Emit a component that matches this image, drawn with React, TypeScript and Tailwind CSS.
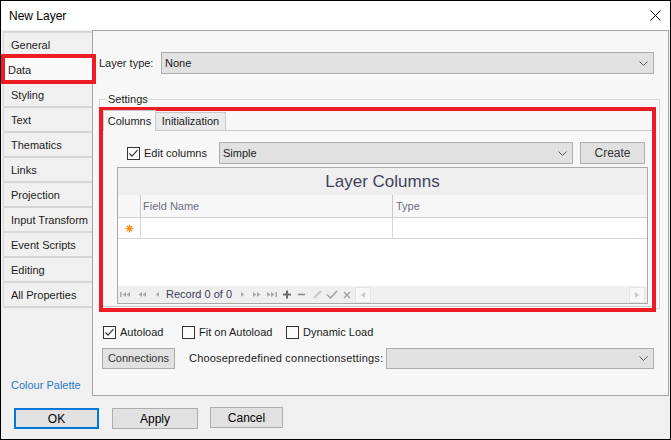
import React from "react";

function Chevron() {
  return (
    <svg width="9" height="5" viewBox="0 0 9 5" className="shrink-0">
      <path d="M0.5 0.5L4.5 4.5L8.5 0.5" fill="none" stroke="#555555" strokeWidth="1" />
    </svg>
  );
}

function Check({ checked }: { checked?: boolean }) {
  return (
    <span className="w-[13px] h-[13px] border border-[#333333] bg-[#fbfbfb] flex items-center justify-center shrink-0">
      {checked && (
        <svg width="11" height="11" viewBox="0 0 11 11">
          <path d="M1.5 5.5L4 8.2L9.5 2.2" fill="none" stroke="#333333" strokeWidth="1.2" />
        </svg>
      )}
    </span>
  );
}

const items = [
  "General",
  "Data",
  "Styling",
  "Text",
  "Thematics",
  "Links",
  "Projection",
  "Input Transform",
  "Event Scripts",
  "Editing",
  "All Properties",
];

function Star() {
  return (
    <svg width="9" height="9" viewBox="0 0 9 9">
      <g stroke="#f7931e" strokeWidth="1.2">
        <path d="M4.5 0.5V8.5M0.5 4.5H8.5M1.7 1.7L7.3 7.3M7.3 1.7L1.7 7.3" />
      </g>
      <circle cx="4.5" cy="4.5" r="2.2" fill="#f7931e" />
    </svg>
  );
}

export default function App() {
  return (
    <div className="relative w-[671px] h-[440px] border border-black bg-[#f0f0f0] flex flex-col overflow-hidden font-['Liberation_Sans',Arial,sans-serif] text-[11px] text-[#1b1b1b] leading-none">
      {/* title bar */}
      <div className="h-[29px] shrink-0 bg-white flex items-center justify-between">
        <span className="pl-[8px] pt-[1px] text-[12px] text-black">New Layer</span>
        <svg width="11" height="11" viewBox="0 0 11 11" className="mr-[9px]">
          <path d="M0.5 0.5L10.5 10.5M10.5 0.5L0.5 10.5" stroke="#000000" strokeWidth="1" />
        </svg>
      </div>

      {/* body */}
      <div className="flex h-[366px] shrink-0">
        {/* sidebar */}
        <div className="w-[91px] flex flex-col">
          <div className="mt-[1px] ml-[2px] border-t-2 border-[#d6d6d6]">
            {items.map((it) =>
              it === "Data" ? (
                <div
                  key={it}
                  className="h-[25px] -ml-[2px] pl-[7px] pt-[1px] bg-[#f9f9f9] border-b-2 border-[#d6d6d6] flex items-center"
                >
                  {it}
                </div>
              ) : (
                <div
                  key={it}
                  className="h-[25px] pl-[7px] pt-[1px] border-l border-b-2 border-[#d6d6d6] flex items-center"
                >
                  {it}
                </div>
              )
            )}
          </div>
          <div className="mt-auto pl-[10px] pb-[5px] text-[#2b78c8]">Colour Palette</div>
        </div>

        {/* panel */}
        <div className="w-[577px] border border-[#a6a6a6] bg-[#f7f7f7] flex flex-col">
          {/* layer type */}
          <div className="flex items-center mt-[21px] pl-[6px] pr-[14px]">
            <span className="w-[62px]">Layer type:</span>
            <div className="flex-1 h-[22px] border border-[#adadad] bg-[#e1e1e1] flex items-center justify-between pl-[3px] pr-[5px]">
              <span>None</span>
              <Chevron />
            </div>
          </div>

          {/* settings */}
          <fieldset className="mt-[19px] ml-[6px] mr-[8px] border border-[#d8d8d8] pl-[2px] pr-[5px] pb-[1px]">
            <legend className="ml-[5px] px-[1px] leading-[13px]">Settings</legend>
            <div className="pt-[4px]">
              {/* tabs */}
              <div className="flex items-end h-[20px] pl-[1px]">
                <div className="relative z-10 h-[21px] -mb-px w-[53px] border border-b-0 border-[#c8c8c8] bg-[#f7f7f7] flex items-center justify-center">
                  Columns
                </div>
                <div className="h-[18px] w-[70px] border border-l-0 border-b-0 border-[#c8c8c8] bg-[#ebebeb] flex items-center justify-center">
                  Initialization
                </div>
              </div>
              {/* tab page */}
              <div className="border border-[#c8c8c8] pl-[14px] pr-[5px] pt-[11px] pb-[2px]">
                <div className="flex items-center h-[22px] mr-[3px]">
                  <div className="w-[92px] ml-[10px] flex items-center gap-[4px]">
                    <Check checked />
                    <span>Edit columns</span>
                  </div>
                  <div className="flex-1 h-[22px] border border-[#adadad] bg-[#e1e1e1] flex items-center justify-between pl-[3px] pr-[5px]">
                    <span>Simple</span>
                    <Chevron />
                  </div>
                  <div className="ml-[7px] w-[65px] h-[22px] -mt-[1px] border border-[#adadad] bg-[#e1e1e1] flex items-center justify-center text-[12px] text-[#333333]">
                    Create
                  </div>
                </div>

                {/* grid */}
                <div className="mt-[3px] h-[137px] border border-[#a9a9a9] flex flex-col bg-white">
                  <div className="h-[27px] bg-[#efefef] flex items-center justify-center text-[17px] text-[#42425c]">
                    Layer Columns
                  </div>
                  <div className="h-[23px] bg-[#f7f7f7] border-b border-[#d0d0d0] flex text-[#6e6e82]">
                    <div className="w-[23px] border-r border-[#c8c8c8]" />
                    <div className="w-[252px] border-r border-[#c8c8c8] flex items-center pl-[2px]">Field Name</div>
                    <div className="flex-1 flex items-center pl-[3px]">Type</div>
                  </div>
                  <div className="h-[21px] border-b border-[#d8d8d8] flex">
                    <div className="w-[23px] border-r border-[#d8d8d8] flex items-center justify-center">
                      <Star />
                    </div>
                    <div className="w-[252px] border-r border-[#d8d8d8]" />
                    <div className="flex-1" />
                  </div>
                  <div className="flex-1 bg-white" />
                  {/* navigator */}
                  <div className="h-[17px] bg-[#efefef] flex items-center">
                    <svg width="48" height="17" viewBox="0 0 48 17" className="shrink-0">
                      <g fill="#a8a8a8">
                        <rect x="2" y="6" width="1.5" height="5" />
                        <polygon points="8,6 4.5,8.5 8,11" />
                        <polygon points="12,6 8.5,8.5 12,11" />
                        <polygon points="24,6 20.5,8.5 24,11" />
                        <polygon points="28,6 24.5,8.5 28,11" />
                        <polygon points="41,6 38,8.5 41,11" />
                      </g>
                    </svg>
                    <span className="w-[66px] text-[#3b3b5c] whitespace-nowrap">Record 0 of 0</span>
                    <svg width="123" height="17" viewBox="0 0 123 17" className="shrink-0">
                      <g fill="#a8a8a8">
                        <polygon points="9,6 12,8.5 9,11" />
                        <polygon points="21,6 24.5,8.5 21,11" />
                        <polygon points="25,6 28.5,8.5 25,11" />
                        <polygon points="35,6 38.5,8.5 35,11" />
                        <polygon points="39,6 42.5,8.5 39,11" />
                        <rect x="43.5" y="6" width="1.5" height="5" />
                      </g>
                      <path d="M51 8.5H59M55 4.5V12.5" stroke="#6a6a6a" strokeWidth="2" />
                      <path d="M66 8.5H73" stroke="#8a8a8a" strokeWidth="1.6" />
                      <path d="M82 12L89 5" stroke="#c4c4c4" strokeWidth="2" />
                      <path d="M95 8.5L98.5 12L105 5" fill="none" stroke="#a0a0a0" strokeWidth="1.5" />
                      <path d="M112 6L118 12M118 6L112 12" stroke="#a0a0a0" strokeWidth="1.4" />
                    </svg>
                    <div className="flex-1 h-[17px] flex items-center">
                      <div className="w-[16px] h-[16px] border border-[#e4e4e4] bg-[#f7f7f7] flex items-center justify-center">
                        <svg width="4" height="6" viewBox="0 0 4 6">
                          <polygon points="4,0 0,3 4,6" fill="#c8c8c8" />
                        </svg>
                      </div>
                      <div className="flex-1" />
                      <div className="w-[16px] h-[16px] mr-[2px] border border-[#e4e4e4] bg-[#f7f7f7] flex items-center justify-center">
                        <svg width="4" height="6" viewBox="0 0 4 6">
                          <polygon points="0,0 4,3 0,6" fill="#c8c8c8" />
                        </svg>
                      </div>
                    </div>
                  </div>
                </div>
              </div>
            </div>
          </fieldset>

          {/* checkboxes */}
          <div className="mt-[16px] ml-[10px] h-[14px] flex items-center">
            <div className="w-[79px] flex items-center gap-[4px]">
              <Check checked />
              <span>Autoload</span>
            </div>
            <div className="w-[104px] flex items-center gap-[4px]">
              <Check />
              <span>Fit on Autoload</span>
            </div>
            <div className="flex items-center gap-[4px]">
              <Check />
              <span>Dynamic Load</span>
            </div>
          </div>

          {/* connections */}
          <div className="mt-[9px] ml-[9px] h-[21px] flex items-center">
            <div className="w-[73px] h-[21px] border border-[#adadad] bg-[#e1e1e1] flex items-center justify-center text-[#333333]">
              Connections
            </div>
            <span className="ml-[14px] w-[197px] whitespace-nowrap tracking-[0.2px]">
              Choosepredefined connectionsettings:
            </span>
            <div className="w-[268px] h-[21px] border border-[#adadad] bg-[#e1e1e1] flex items-center justify-end pr-[5px]">
              <Chevron />
            </div>
          </div>
        </div>
      </div>

      {/* footer */}
      <div className="flex items-start pt-[12px] pl-[13px]">
        <div className="w-[85px] h-[21px] border-2 border-[#0078d7] bg-[#e1e1e1] flex items-center justify-center text-[12px] text-black">
          OK
        </div>
        <div className="ml-[13px] w-[86px] h-[21px] border border-[#adadad] bg-[#e1e1e1] flex items-center justify-center text-[12px] text-black">
          Apply
        </div>
        <div className="ml-[12px] -mt-px w-[73px] h-[21px] border border-[#adadad] bg-[#e1e1e1] flex items-center justify-center text-[12px] text-black">
          Cancel
        </div>
      </div>

      {/* red annotation boxes */}
      <div className="absolute left-0 top-[53px] w-[95px] h-[30px] border-4 border-[#ed1c24] pointer-events-none" />
      <div className="absolute left-[98px] top-[106px] w-[557px] h-[205px] border-4 border-[#ed1c24] pointer-events-none" />
    </div>
  );
}
